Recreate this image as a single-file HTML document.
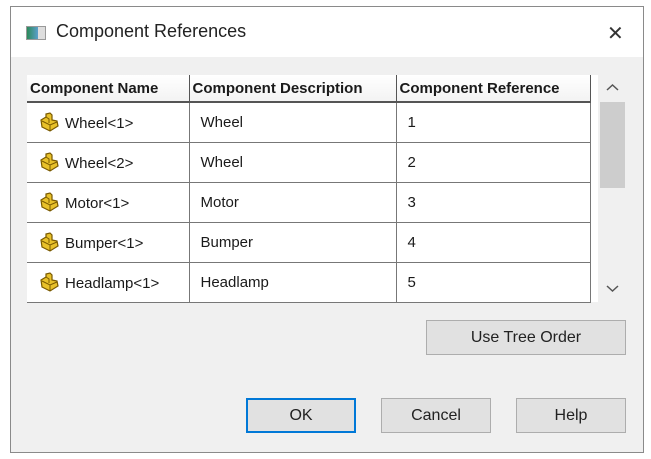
<!DOCTYPE html>
<html><head><style>
*{margin:0;padding:0;box-sizing:border-box}
body{width:651px;height:459px;background:#fff;font-family:"Liberation Sans",sans-serif;position:relative;overflow:hidden}
.dlg{position:absolute;left:10px;top:6px;width:634px;height:447px;border:1px solid #8a8a8a;background:#f0f0f0}
.title{position:absolute;left:0;top:0;width:632px;height:50px;background:#fff}
.title span{position:absolute;left:45px;top:14px;font-size:18px;color:#222}
.ticon{position:absolute;left:15px;top:19px;width:20px;height:14px;border:1px solid #999;background:linear-gradient(90deg,#2c8a5a,#5a9ec9 60%,#ddd 60%)}
.x{position:absolute;left:596px;top:14px;font-size:20px;color:#333}
.list{position:absolute;left:27px;top:75px;width:573px;height:227px;background:#fff}
table{position:absolute;left:27px;top:75px;border-collapse:collapse;font-size:15px;color:#1a1a1a}
th{height:27px;font-weight:bold;text-align:left;padding-left:3px;border-right:1px solid #555;border-bottom:2px solid #555;background:linear-gradient(#fff,#f3f3f3);font-size:15px;white-space:nowrap;overflow:hidden}
td{height:40px;border-right:1px solid #777;border-bottom:1px solid #777;padding-left:11px;vertical-align:middle;white-space:nowrap}
.ic{display:inline-block;vertical-align:-4px;margin-right:5px}
.sb{position:absolute;left:598px;top:75px;width:27px;height:227px;background:#f0f0f0}
.thumb{position:absolute;left:600px;top:102px;width:25px;height:86px;background:#cdcdcd}
.btn{position:absolute;height:35px;border:1px solid #adadad;background:#e1e1e1;font-size:16px;text-align:center;line-height:33px;color:#222}
</style></head><body>
<div class="dlg">
<div class="title"><div class="ticon"></div><span>Component References</span><div class="x">✕</div></div>
</div>
<div class="list"></div>
<table>
<tr><th style="width:162px;max-width:162px">Component Name</th><th style="width:207px;max-width:207px">Component Description</th><th style="width:194px;max-width:194px">Component Reference</th></tr>
<tr><td><svg class="ic" width="22" height="20" viewBox="0 0 22 20"><path d="M3 8 L8 5 L8 2 L12 1 L14 3 L14 8 L19 9 L20 14 L12 19 L4 15 Z" fill="#e8c12a" stroke="#7a5a00" stroke-width="1.2"/><path d="M4 9 L12 13 L19 10 M12 13 L12 19 M8 5 L11 7 L11 11" fill="none" stroke="#7a5a00" stroke-width="1"/></svg>Wheel&lt;1&gt;</td><td>Wheel</td><td>1</td></tr>
<tr><td><svg class="ic" width="22" height="20" viewBox="0 0 22 20"><path d="M3 8 L8 5 L8 2 L12 1 L14 3 L14 8 L19 9 L20 14 L12 19 L4 15 Z" fill="#e8c12a" stroke="#7a5a00" stroke-width="1.2"/><path d="M4 9 L12 13 L19 10 M12 13 L12 19 M8 5 L11 7 L11 11" fill="none" stroke="#7a5a00" stroke-width="1"/></svg>Wheel&lt;2&gt;</td><td>Wheel</td><td>2</td></tr>
<tr><td><svg class="ic" width="22" height="20" viewBox="0 0 22 20"><path d="M3 8 L8 5 L8 2 L12 1 L14 3 L14 8 L19 9 L20 14 L12 19 L4 15 Z" fill="#e8c12a" stroke="#7a5a00" stroke-width="1.2"/><path d="M4 9 L12 13 L19 10 M12 13 L12 19 M8 5 L11 7 L11 11" fill="none" stroke="#7a5a00" stroke-width="1"/></svg>Motor&lt;1&gt;</td><td>Motor</td><td>3</td></tr>
<tr><td><svg class="ic" width="22" height="20" viewBox="0 0 22 20"><path d="M3 8 L8 5 L8 2 L12 1 L14 3 L14 8 L19 9 L20 14 L12 19 L4 15 Z" fill="#e8c12a" stroke="#7a5a00" stroke-width="1.2"/><path d="M4 9 L12 13 L19 10 M12 13 L12 19 M8 5 L11 7 L11 11" fill="none" stroke="#7a5a00" stroke-width="1"/></svg>Bumper&lt;1&gt;</td><td>Bumper</td><td>4</td></tr>
<tr><td><svg class="ic" width="22" height="20" viewBox="0 0 22 20"><path d="M3 8 L8 5 L8 2 L12 1 L14 3 L14 8 L19 9 L20 14 L12 19 L4 15 Z" fill="#e8c12a" stroke="#7a5a00" stroke-width="1.2"/><path d="M4 9 L12 13 L19 10 M12 13 L12 19 M8 5 L11 7 L11 11" fill="none" stroke="#7a5a00" stroke-width="1"/></svg>Headlamp&lt;1&gt;</td><td>Headlamp</td><td>5</td></tr>
</table>
<div class="sb"></div><div class="thumb"></div>
<svg style="position:absolute;left:606px;top:83px" width="13" height="9"><path d="M1 7 L6.5 2 L12 7" fill="none" stroke="#555" stroke-width="1.5"/></svg>
<svg style="position:absolute;left:606px;top:284px" width="13" height="9"><path d="M1 2 L6.5 7 L12 2" fill="none" stroke="#555" stroke-width="1.5"/></svg>
<div class="btn" style="left:426px;top:320px;width:200px">Use Tree Order</div>
<div class="btn" style="left:246px;top:398px;width:110px;border:2px solid #0078d7;line-height:31px">OK</div>
<div class="btn" style="left:381px;top:398px;width:110px">Cancel</div>
<div class="btn" style="left:516px;top:398px;width:110px">Help</div>
</body></html>
